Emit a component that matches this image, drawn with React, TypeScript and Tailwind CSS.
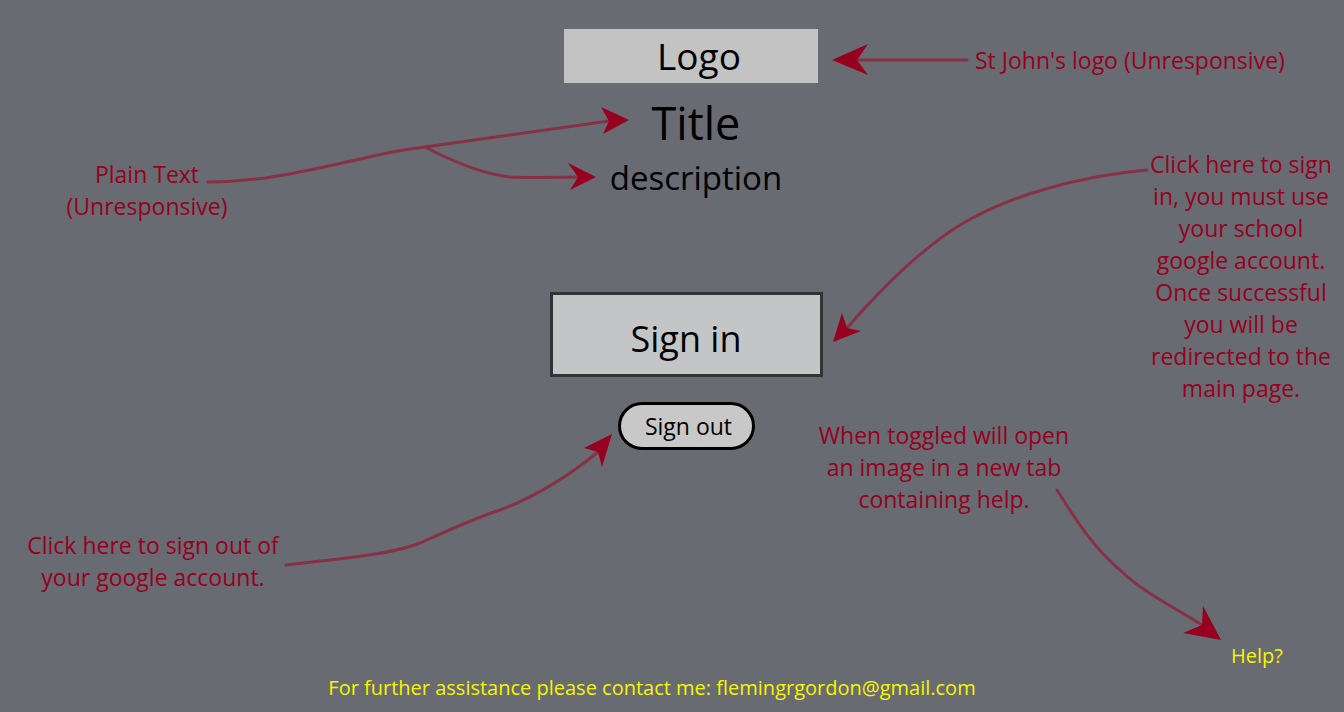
import React from 'react';

const RED = '#98001f';
const LINE = '#873147';

type Head = { tip: [number, number]; a: [number, number]; b: [number, number]; notch: [number, number] };

const heads: Head[] = [
    { tip: [832, 60], a: [868, 44], b: [868, 75], notch: [857, 60] },
    { tip: [629, 120], a: [601, 107], b: [603, 134], notch: [609, 121] },
    { tip: [596, 177], a: [568, 163], b: [570, 190], notch: [578, 177] },
    { tip: [833, 342], a: [842, 313], b: [861, 331], notch: [847, 328] },
    { tip: [612, 434], a: [584, 448], b: [602, 467], notch: [598, 452] },
    { tip: [1221, 640], a: [1203, 606], b: [1183, 633], notch: [1202, 625] },
];

const lines = [
    'M967 60 L857 60',
    'M208 182 C260 182 300 172 356 160 C380 154 400 150 425 147 L609 121',
    'M425 147 C450 160 480 174 510 177 C530 178 560 177 578 177',
    'M1147 170 C1080 176 1010 195 960 225 C920 250 880 290 847 328',
    'M286 565 C330 560 390 555 420 543 C445 532 470 520 500 510 C540 495 570 475 598 452',
    'M1057 490 C1070 510 1090 545 1120 570 C1140 590 1170 605 1202 625',
];

const Arrows = () => (
    <svg className="absolute inset-0 pointer-events-none" width="1344" height="712" viewBox="0 0 1344 712">
        {lines.map((d, i) => (
            <path key={i} d={d} fill="none" stroke={LINE} strokeWidth="3" strokeLinecap="round" />
        ))}
        {heads.map((h, i) => (
            <polygon
                key={i}
                fill={RED}
                points={`${h.tip.join(',')} ${h.a.join(',')} ${h.notch.join(',')} ${h.b.join(',')}`}
            />
        ))}
    </svg>
);

export default function App() {
    return (
        <div
            className="relative w-full h-[712px] overflow-hidden bg-[#686b71] flex flex-col items-center"
            style={{ fontFamily: '"Open Sans", "Noto Sans", sans-serif' }}
        >
            {/* main page mockup */}
            <div className="flex flex-col items-center pl-[28px] pt-[29px] text-black">
                <div className="ml-[10px] w-[254px] h-[54px] bg-[#c3c3c3] flex items-center justify-center text-[37px] leading-none pl-[16px] pb-[2px]">
                    Logo
                </div>
                <h1 className="mt-[14px] text-[45px] leading-[52px] pl-[20px]">Title</h1>
                <p className="mt-[9px] text-[33px] leading-[40px] pl-[20px]">description</p>
                <button className="mt-[94px] w-[273px] h-[85px] border-[3px] border-[#333333] bg-[#c4c5c7] text-[36px] leading-none pt-[9px]">
                    Sign in
                </button>
                <button className="mt-[25px] w-[137px] h-[48px] rounded-full border-[3px] border-black bg-[#c8c8c8] text-[23px] leading-none pl-[5px]">
                    Sign out
                </button>
            </div>

            <p className="mt-auto mb-[12px] pr-[40px] text-[20px] leading-[24px] text-[#f5f500]">
                For further assistance please contact me: flemingrgordon@gmail.com
            </p>

            <a className="absolute left-[1231px] top-[644px] text-[20px] leading-[24px] text-[#f5f500]">Help?</a>

            {/* annotations */}
            <Arrows />
            <div
                className="absolute inset-0 pointer-events-none text-[23px] leading-[32px] whitespace-nowrap"
                style={{ color: RED }}
            >
                <p className="absolute left-[975px] top-[44px]">St John's logo (Unresponsive)</p>
                <p className="absolute left-[47px] top-[158px] w-[200px] text-center">
                    Plain Text
                    <br />
                    (Unresponsive)
                </p>
                <p className="absolute left-[1121px] top-[148px] w-[240px] text-center">
                    Click here to sign
                    <br />
                    in, you must use
                    <br />
                    your school
                    <br />
                    google account.
                    <br />
                    Once successful
                    <br />
                    you will be
                    <br />
                    redirected to the
                    <br />
                    main page.
                </p>
                <p className="absolute left-[3px] top-[529px] w-[300px] text-center">
                    Click here to sign out of
                    <br />
                    your google account.
                </p>
                <p className="absolute left-[794px] top-[419px] w-[300px] text-center">
                    When toggled will open
                    <br />
                    an image in a new tab
                    <br />
                    containing help.
                </p>
            </div>
        </div>
    );
}
